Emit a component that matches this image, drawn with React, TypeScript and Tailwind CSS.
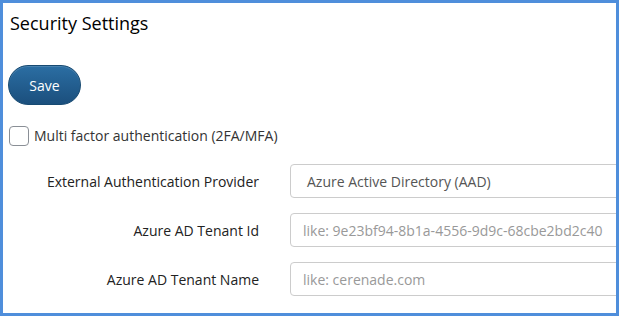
import React from 'react'

const labelCls = 'w-[249px] shrink-0 text-right text-[14px] font-medium text-[#222]'
const inputCls =
  'ml-[31px] h-[34px] w-[360px] shrink-0 rounded-[4px] border border-[#ccc] bg-white px-[12px] text-[14px] text-[#555] outline-none placeholder:text-[#999]'

export default function App() {
  return (
    <div
      className="h-[316px] w-[619px] overflow-hidden border-[3px] border-[#4f8edb] bg-white"
      style={{ fontFamily: '"Open Sans", "Noto Sans", sans-serif' }}
    >
      <div className="pl-[7px] pt-[7px]">
        <h1 className="text-[18px] leading-[26px] font-medium text-black">Security Settings</h1>

        <button className="mt-[29px] ml-[-2px] h-[40px] w-[73px] rounded-full border border-[#174a72] bg-gradient-to-b from-[#2b6ea3] to-[#1b4f7d] text-[14px] font-normal text-white shadow-[inset_0_1px_0_rgba(255,255,255,0.15)]">
          Save
        </button>

        <label className="mt-[20px] flex items-center">
          <span className="ml-[-1px] h-[20px] w-[20px] rounded-[4px] border border-[#8a8f96] bg-white" />
          <span className="ml-[5px] text-[14px] text-[#333]">Multi factor authentication (2FA/MFA)</span>
        </label>

        <div className="mt-[18px] flex flex-col gap-[15px]">
          <div className="flex items-center">
            <span className={labelCls}>External Authentication Provider</span>
            <div className={inputCls + ' flex items-center pl-[16px]'}>Azure Active Directory (AAD)</div>
          </div>
          <div className="flex items-center">
            <span className={labelCls}>Azure AD Tenant Id</span>
            <input className={inputCls} placeholder="like: 9e23bf94-8b1a-4556-9d9c-68cbe2bd2c40" />
          </div>
          <div className="flex items-center">
            <span className={labelCls}>Azure AD Tenant Name</span>
            <input className={inputCls} placeholder="like: cerenade.com" />
          </div>
        </div>
      </div>
    </div>
  )
}
